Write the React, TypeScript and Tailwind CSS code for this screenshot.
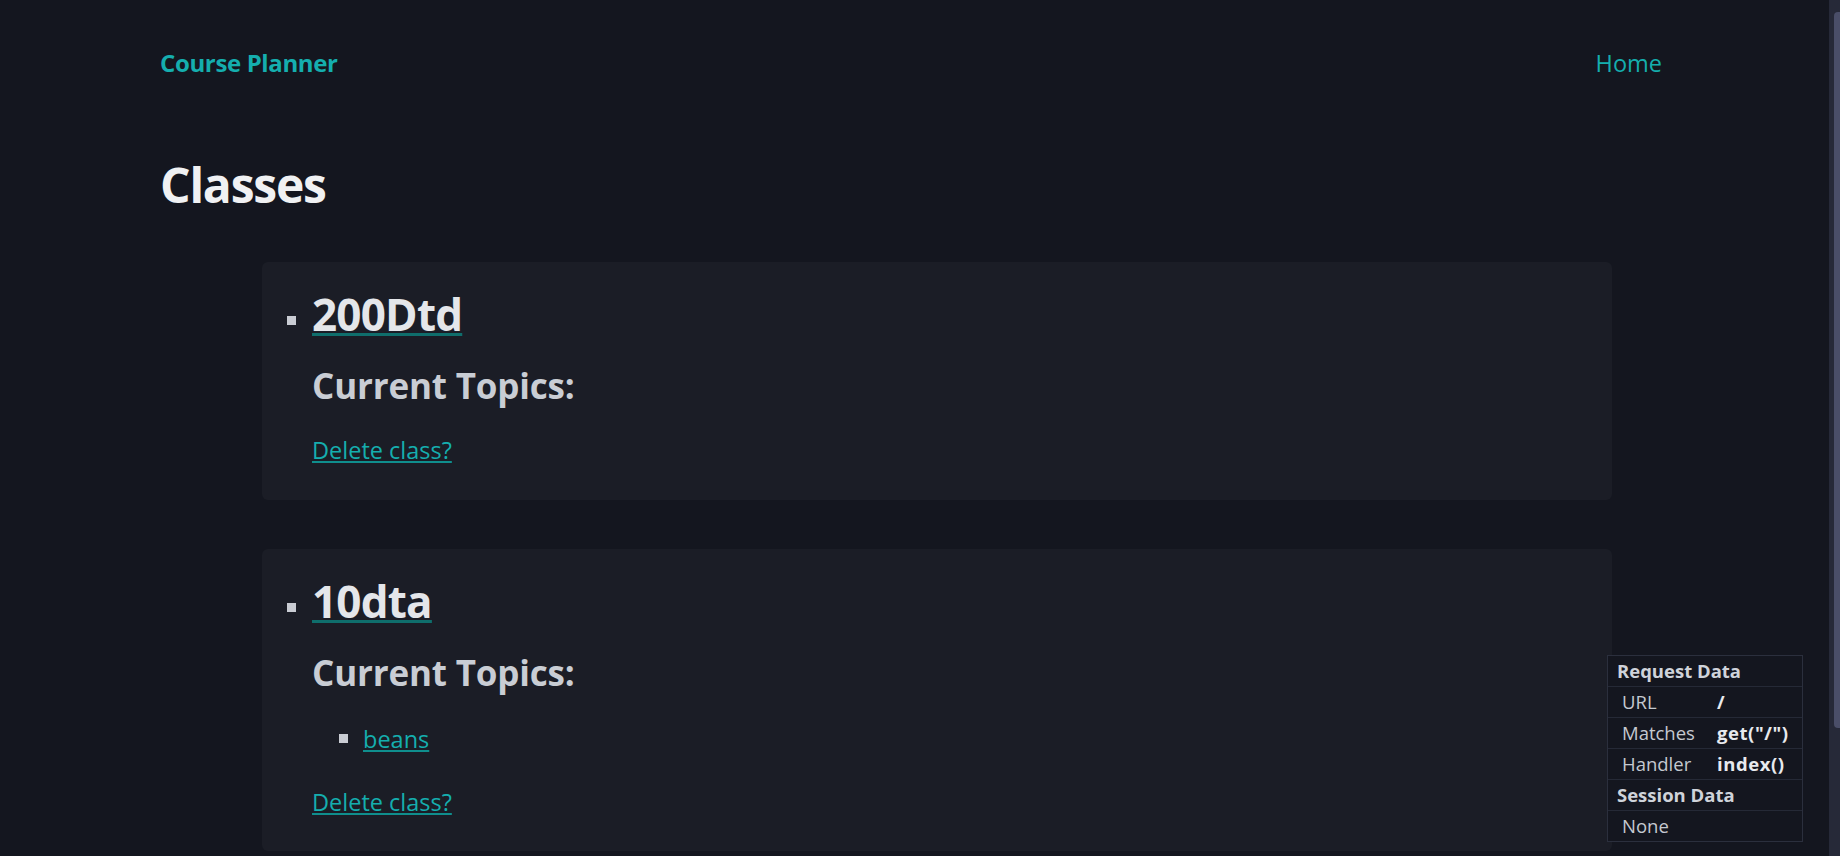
type Topic = { name: string };
type ClassItem = { code: string; topics: Topic[] };

const classes: ClassItem[] = [
  { code: '200Dtd', topics: [] },
  { code: '10dta', topics: [{ name: 'beans' }] },
];

const ClassCard = ({ item }: { item: ClassItem }) => (
  <div
    className={`mt-[49px] ml-[102px] w-[1350px] shrink-0 rounded-md bg-[#1b1d26] pl-[25px] pt-[26px] ${
      item.topics.length ? 'pb-[33px]' : 'pb-[34px]'
    }`}
  >
    <div className="flex">
      <div className="mt-[28px] mr-[16px] h-[9px] w-[9px] shrink-0 bg-[#c9ccd3]" />
      <div className="flex flex-col items-start">
        <a
          href="#"
          className="text-[44px] leading-[52px] font-bold tracking-[-0.018em] text-[#e4e6ea] underline decoration-[#0f6e6c] decoration-[3px] underline-offset-[2px]"
        >
          {item.code}
        </a>
        <h3 className="mt-[24px] text-[35px] leading-[44px] font-bold tracking-[-0.005em] text-[#c9cdd4]">
          Current Topics:
        </h3>
        {item.topics.length > 0 && (
          <ul className="mt-[28px] pl-[27px]">
            {item.topics.map((t) => (
              <li key={t.name} className="flex">
                <div className="mt-[11px] mr-[15px] h-[9px] w-[9px] shrink-0 bg-[#c9ccd3]" />
                <a
                  href="#"
                  className="text-[23.5px] leading-[32px] text-[#15aeae] underline decoration-[#0f8e8d] decoration-2 underline-offset-[2px]"
                >
                  {t.name}
                </a>
              </li>
            ))}
          </ul>
        )}
        <a
          href="#"
          className={`${
            item.topics.length ? 'mt-[31px]' : 'mt-[26px]'
          } text-[23.5px] leading-[32px] text-[#15aeae] underline decoration-[#0f8e8d] decoration-2 underline-offset-[2px]`}
        >
          Delete class?
        </a>
      </div>
    </div>
  </div>
);

const DebugPanel = () => {
  const rows: { label: string; value?: string; header?: boolean }[] = [
    { label: 'Request Data', header: true },
    { label: 'URL', value: '/' },
    { label: 'Matches', value: 'get("/")' },
    { label: 'Handler', value: 'index()' },
    { label: 'Session Data', header: true },
    { label: 'None' },
  ];
  return (
    <div className="absolute right-[37px] bottom-[14px] w-[196px] border border-[#2b2f3d] bg-[#14161f] text-[18.5px] leading-[30px]">
      {rows.map((r, i) => (
        <div
          key={r.label}
          className={`flex h-[30px] box-content ${i > 0 ? 'border-t border-[#252936]' : ''}`}
        >
          {r.header ? (
            <span className="pl-[9px] font-bold text-[#cfd3da]">{r.label}</span>
          ) : (
            <>
              <span className="w-[109px] shrink-0 pl-[14px] text-[#c5c9d0]">{r.label}</span>
              {r.value && (
                <span className="font-bold tracking-[0.03em] text-[#e8eaee]">{r.value}</span>
              )}
            </>
          )}
        </div>
      ))}
    </div>
  );
};

export default function App() {
  return (
    <div className="relative flex h-[856px] w-full overflow-hidden bg-[#14161f] font-['Open_Sans',sans-serif]">
      <div className="flex min-w-0 flex-1 flex-col">
        <div className="ml-[160px] w-[1502px] shrink-0">
          <nav className="mt-[47px] flex h-8 items-baseline justify-between">
            <a href="#" className="text-[24px] leading-8 font-bold tracking-[-0.015em] text-[#15aeae]">
              Course Planner
            </a>
            <a href="#" className="text-[23.5px] leading-8 text-[#15aeae]">
              Home
            </a>
          </nav>
          <h1 className="mt-[78px] text-[48px] leading-[56px] font-bold tracking-[-0.025em] text-[#f0f1f3]">
            Classes
          </h1>
        </div>
        <ul className="ml-[160px] flex flex-col">
          {classes.map((c) => (
            <li key={c.code}>
              <ClassCard item={c} />
            </li>
          ))}
        </ul>
      </div>
      {/* scrollbar strip */}
      <div className="flex h-full w-[11px] shrink-0 flex-col bg-[#262938]">
        <div className="mt-[12px] ml-[5px] h-[716px] w-[6px] rounded-tl-sm rounded-bl-sm bg-[#4a4e68]" />
      </div>
      <DebugPanel />
    </div>
  );
}
